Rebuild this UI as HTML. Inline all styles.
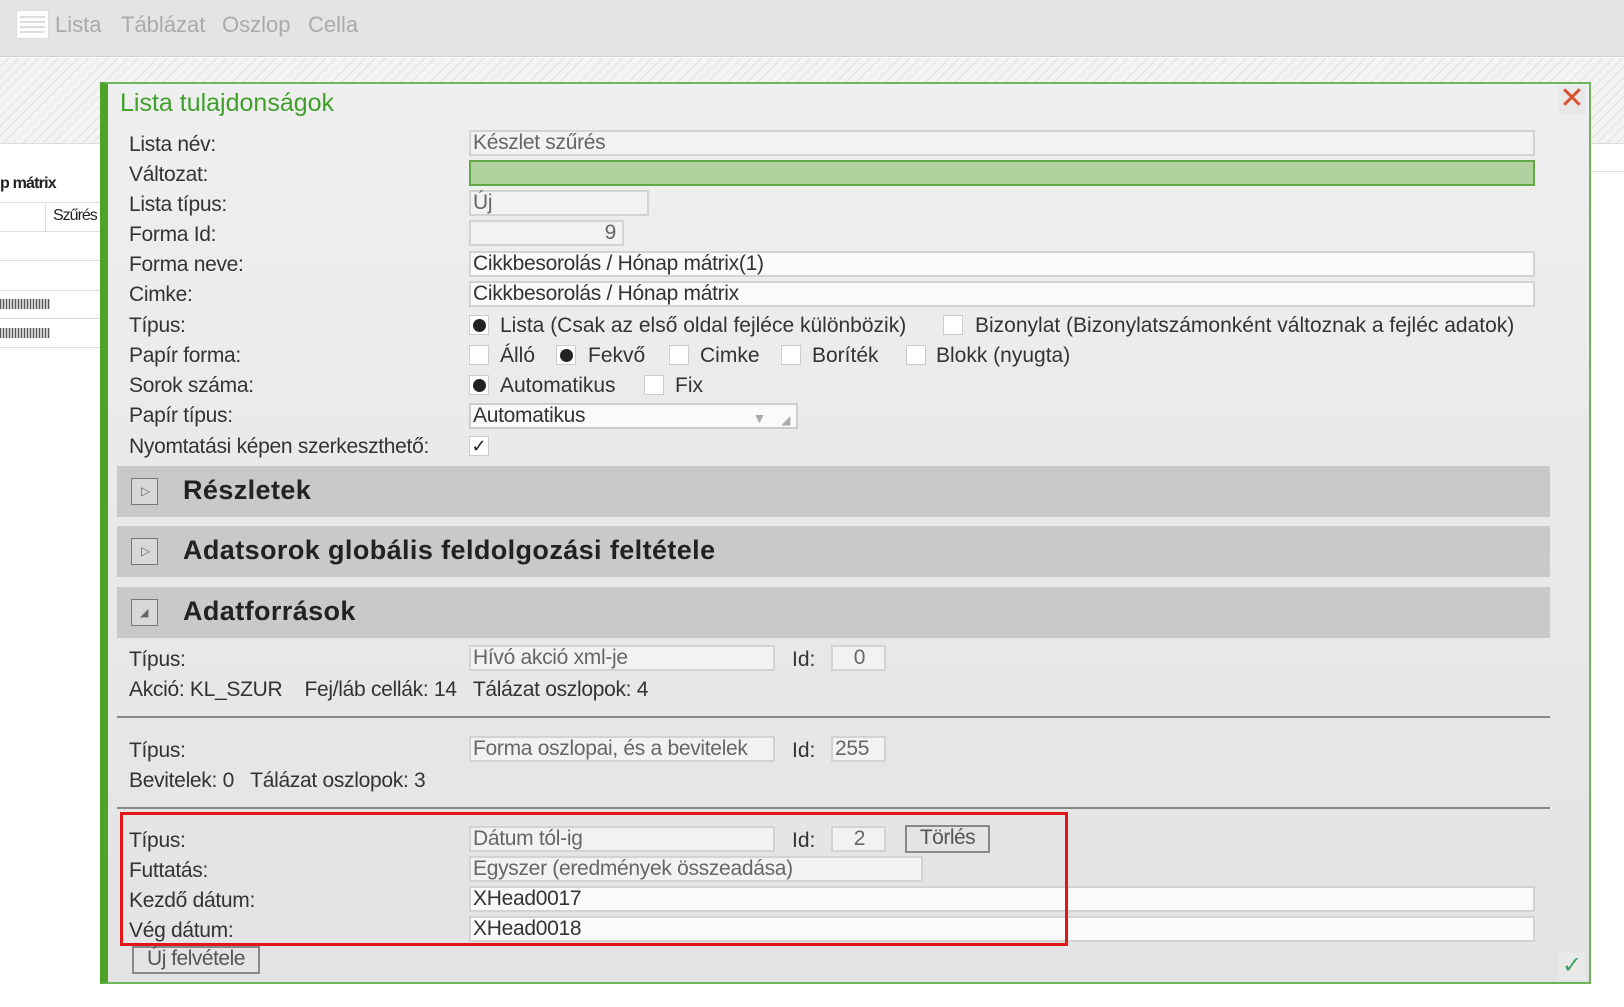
<!DOCTYPE html>
<html><head><meta charset="utf-8"><style>
*{box-sizing:border-box;margin:0;padding:0}
body{width:1624px;height:1007px;overflow:hidden;background:#fff;font-family:"Liberation Sans",Arial,sans-serif;position:relative;color:#333}
.a{position:absolute;white-space:nowrap}
.menu{left:0;top:0;width:1624px;height:57px;background:#e4e4e4;border-bottom:1px solid #cfcfcf}
.mi{top:12px;font-size:22px;color:#aaa}
.hatch{left:0;top:58px;width:1624px;height:85px;background:repeating-linear-gradient(135deg,#f4f4f4 0 6px,#e2e2e2 6px 7px)}
.dlg{left:100px;top:82px;width:1491px;height:902px;background:linear-gradient(#efefef,#e3e3e3);border:2px solid #6fb55b;border-left:8px solid #4fa32a}
.lbl{font-size:21px;color:#333;left:129px;letter-spacing:-0.3px}
.in{left:469px;height:26px;border:2px solid #d3d3d3;background:#f2f2f2;font-size:21px;color:#666;padding-left:2px;line-height:22px;letter-spacing:-0.3px}
.in.w{background:#fafafa;color:#333}
.cb{width:20px;height:20px;border:1px solid #ccc;background:#fff}
.rd::after{content:"";position:absolute;left:3px;top:3px;width:13px;height:13px;border-radius:50%;background:#222}
.t{font-size:21px;color:#333}
.sec{left:117px;width:1433px;height:51px;background:#c9c9c9}
.sec .ic{position:absolute;left:14px;top:12px;width:27px;height:27px;border:1px solid #777;background:#d8d8d8}
.sec .h{position:absolute;left:66px;top:9px;font-size:27px;font-weight:bold;color:#222;letter-spacing:0.4px}
.hr{left:117px;width:1433px;height:2px;background:#888}
.btn{border:2px solid #888;background:#e4e4e4;font-size:21px;color:#555;text-align:center;line-height:22px;letter-spacing:-0.5px}
</style></head><body>
<div class="a menu"></div>
<div class="a" style="left:16px;top:10px;width:33px;height:29px;background:#fff;border:1px solid #ddd"></div>
<div class="a" style="left:20px;top:16px;width:25px;height:17px;background:repeating-linear-gradient(#ddd 0 2px,transparent 2px 5px)"></div>
<div class="a mi" style="left:55px">Lista</div>
<div class="a mi" style="left:121px">Táblázat</div>
<div class="a mi" style="left:222px">Oszlop</div>
<div class="a mi" style="left:308px">Cella</div>
<div class="a hatch"></div>
<div class="a" style="left:0;top:143px;width:100px;height:1px;background:#ddd"></div>
<div class="a" style="left:0;top:175px;font-size:16px;font-weight:bold;color:#222;letter-spacing:-0.8px">p mátrix</div>
<div class="a" style="left:0;top:202px;width:100px;height:1px;background:#ddd"></div>
<div class="a" style="left:45px;top:202px;width:1px;height:30px;background:#ddd"></div>
<div class="a" style="left:53px;top:207px;font-size:16px;color:#222;letter-spacing:-1px">Szűrés</div>
<div class="a" style="left:0;top:231px;width:100px;height:1px;background:#ddd"></div>
<div class="a" style="left:0;top:260px;width:100px;height:1px;background:#ddd"></div>
<div class="a" style="left:0;top:290px;width:100px;height:1px;background:#ddd"></div>
<div class="a" style="left:0;top:299px;width:50px;height:10px;background:repeating-linear-gradient(90deg,#555 0 1px,#ccc 1px 3px)"></div>
<div class="a" style="left:0;top:318px;width:100px;height:1px;background:#ddd"></div>
<div class="a" style="left:0;top:328px;width:50px;height:10px;background:repeating-linear-gradient(90deg,#555 0 1px,#ccc 1px 3px)"></div>
<div class="a" style="left:0;top:347px;width:100px;height:1px;background:#ddd"></div>
<div class="a" style="left:1591px;top:143px;width:33px;height:1px;background:#ddd"></div>
<div class="a" style="left:1591px;top:171px;width:33px;height:1px;background:#ddd"></div>

<div class="a dlg"></div>
<div class="a" style="left:120px;top:89px;font-size:25px;color:#3fa02a">Lista tulajdonságok</div>
<div class="a" style="left:1558px;top:86px;width:28px;height:28px;background:#e8e8e8;color:#d9502a;font-size:30px;line-height:26px;text-align:center">✕</div>

<div class="a lbl" style="top:133px">Lista név:</div>
<div class="a lbl" style="top:163px">Változat:</div>
<div class="a lbl" style="top:193px">Lista típus:</div>
<div class="a lbl" style="top:223px">Forma Id:</div>
<div class="a lbl" style="top:253px">Forma neve:</div>
<div class="a lbl" style="top:283px">Cimke:</div>
<div class="a lbl" style="top:314px">Típus:</div>
<div class="a lbl" style="top:344px">Papír forma:</div>
<div class="a lbl" style="top:374px">Sorok száma:</div>
<div class="a lbl" style="top:404px">Papír típus:</div>
<div class="a lbl" style="top:435px">Nyomtatási képen szerkeszthető:</div>

<div class="a in" style="top:130px;width:1066px">Készlet szűrés</div>
<div class="a in" style="top:160px;width:1066px;background:#b1d29f;border-color:#62a845"></div>
<div class="a in" style="top:190px;width:180px">Új</div>
<div class="a in" style="top:220px;width:155px;text-align:right;padding-right:6px">9</div>
<div class="a in w" style="top:251px;width:1066px">Cikkbesorolás / Hónap mátrix(1)</div>
<div class="a in w" style="top:281px;width:1066px">Cikkbesorolás / Hónap mátrix</div>

<div class="a cb rd" style="left:469px;top:315px"></div><div class="a t" style="left:500px;top:314px">Lista (Csak az első oldal fejléce különbözik)</div>
<div class="a cb" style="left:943px;top:315px"></div><div class="a t" style="left:975px;top:314px">Bizonylat (Bizonylatszámonként változnak a fejléc adatok)</div>
<div class="a cb" style="left:469px;top:345px"></div><div class="a t" style="left:500px;top:344px">Álló</div>
<div class="a cb rd" style="left:556px;top:345px"></div><div class="a t" style="left:588px;top:344px">Fekvő</div>
<div class="a cb" style="left:669px;top:345px"></div><div class="a t" style="left:700px;top:344px">Cimke</div>
<div class="a cb" style="left:781px;top:345px"></div><div class="a t" style="left:812px;top:344px">Boríték</div>
<div class="a cb" style="left:906px;top:345px"></div><div class="a t" style="left:936px;top:344px">Blokk (nyugta)</div>
<div class="a cb rd" style="left:469px;top:375px"></div><div class="a t" style="left:500px;top:374px">Automatikus</div>
<div class="a cb" style="left:644px;top:375px"></div><div class="a t" style="left:675px;top:374px">Fix</div>
<div class="a in w" style="top:403px;width:329px;border-color:#ccc">Automatikus<span style="position:absolute;right:30px;top:2px;color:#aaa;font-size:14px">▼</span><span style="position:absolute;right:6px;top:4px;color:#aaa;font-size:12px">◢</span></div>
<div class="a cb" style="left:469px;top:436px;font-size:18px;line-height:18px;text-align:center;color:#222">✓</div>

<div class="a sec" style="top:466px"><div class="ic"><span style="position:absolute;left:9px;top:5px;font-size:12px;color:#666">▷</span></div><div class="h">Részletek</div></div>
<div class="a sec" style="top:526px"><div class="ic"><span style="position:absolute;left:9px;top:5px;font-size:12px;color:#666">▷</span></div><div class="h">Adatsorok globális feldolgozási feltétele</div></div>
<div class="a sec" style="top:587px"><div class="ic"><span style="position:absolute;left:8px;top:6px;font-size:11px;color:#666">◢</span></div><div class="h">Adatforrások</div></div>

<div class="a lbl" style="top:648px">Típus:</div>
<div class="a in" style="top:645px;width:306px">Hívó akció xml-je</div>
<div class="a t" style="left:792px;top:648px">Id:</div>
<div class="a in" style="left:831px;top:645px;width:55px;text-align:center">0</div>
<div class="a lbl" style="top:678px">Akció: KL_SZUR&nbsp;&nbsp;&nbsp; Fej/láb cellák: 14&nbsp;&nbsp; Tálázat oszlopok: 4</div>
<div class="a hr" style="top:716px"></div>

<div class="a lbl" style="top:739px">Típus:</div>
<div class="a in" style="top:736px;width:306px">Forma oszlopai, és a bevitelek</div>
<div class="a t" style="left:792px;top:739px">Id:</div>
<div class="a in" style="left:831px;top:736px;width:55px">255</div>
<div class="a lbl" style="top:769px">Bevitelek: 0&nbsp;&nbsp; Tálázat oszlopok: 3</div>
<div class="a hr" style="top:807px"></div>

<div class="a lbl" style="top:829px">Típus:</div>
<div class="a in" style="top:826px;width:306px">Dátum tól-ig</div>
<div class="a t" style="left:792px;top:829px">Id:</div>
<div class="a in" style="left:831px;top:826px;width:55px;text-align:center">2</div>
<div class="a btn" style="left:905px;top:825px;width:85px;height:28px">Törlés</div>
<div class="a lbl" style="top:859px">Futtatás:</div>
<div class="a in" style="top:856px;width:454px">Egyszer (eredmények összeadása)</div>
<div class="a lbl" style="top:889px">Kezdő dátum:</div>
<div class="a in w" style="top:886px;width:1066px">XHead0017</div>
<div class="a lbl" style="top:919px">Vég dátum:</div>
<div class="a in w" style="top:916px;width:1066px">XHead0018</div>
<div class="a" style="left:120px;top:812px;width:948px;height:134px;border:3px solid #e0161b"></div>
<div class="a btn" style="left:132px;top:946px;width:128px;height:28px">Új felvétele</div>
<div class="a" style="left:1558px;top:952px;width:28px;height:28px;background:#e9e9e9;color:#4aa06a;font-size:24px;line-height:28px;text-align:center">✓</div>
</body></html>
